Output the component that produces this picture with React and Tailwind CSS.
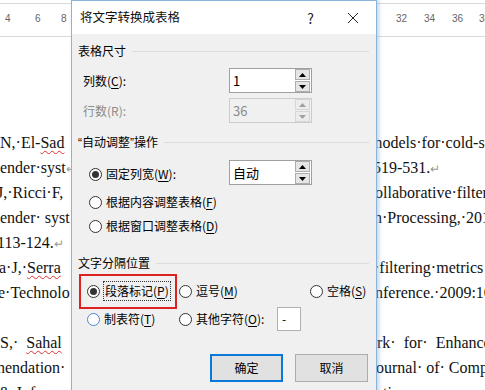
import React from 'react';

const Radio = ({ checked = false, blue = false }) => (
    <span className={`w-[13px] h-[13px] rounded-full border bg-white flex items-center justify-center shrink-0 ${blue ? 'border-[#4d87c4]' : 'border-[#333333]'}`}>
        {checked && <span className="w-[7px] h-[7px] rounded-full bg-[#333333]"></span>}
    </span>
);

const Spin = ({ disabled = false }) => {
    const tri = disabled ? '#a0a0a0' : '#000000';
    const btn = `w-[15px] h-[11px] border flex items-center justify-center ${disabled ? 'border-[#d6d6d6] bg-[#ececec]' : 'border-[#adadad] bg-[#e5e5e5]'}`;
    return (
        <div className="flex flex-col gap-[1px] mr-[1px]">
            <div className={btn}>
                <svg width="7" height="4" viewBox="0 0 7 4"><path d="M0 4 L3.5 0 L7 4 Z" fill={tri} /></svg>
            </div>
            <div className={btn}>
                <svg width="7" height="4" viewBox="0 0 7 4"><path d="M0 0 L3.5 4 L7 0 Z" fill={tri} /></svg>
            </div>
        </div>
    );
};

const SpinBox = ({ value, disabled = false }) => (
    <div className={`w-[83px] h-[25px] border flex items-center justify-between ${disabled ? 'border-[#cccccc] bg-[#f0f0f0] text-[#8a8a8a]' : 'border-[#a0a0a0] bg-white text-black'}`}>
        <span className="pl-[3px] text-[13px]">{value}</span>
        <Spin disabled={disabled} />
    </div>
);

const GroupHead = ({ children }) => (
    <div className="h-[16px] flex items-center gap-[6px] pl-[6px] pr-[7px]">
        <span className="text-[12px] text-black whitespace-nowrap">{children}</span>
        <div className="flex-1 border-t border-[#dcdcdc]"></div>
    </div>
);

const U = ({ children }) => <span className="underline underline-offset-2">{children}</span>;

// latin quote marks, narrow like the original dialog font
const Q = ({ children }) => <span className="font-['Liberation_Sans',sans-serif]">{children}</span>;

const docLines = [
    { l: 'N,·El-', sq: 'Sad', ml: 0, r: 'models·for·cold-start', rml: -6 },
    { l: 'ender·syst', ml: 0, r: '519-531.', ret: true, rml: -3 },
    { l: 'J,·Ricci·F,', ml: -3, r: 'collaborative·filtering', rml: -8 },
    { l: 'ender·\u00a0syst', ml: 0, r: 'n·Processing,·2010', rml: -2 },
    { l: '113-124.', ret: true, ml: -3 },
    { l: 'a·J,·', sq: 'Serra', ml: -1, r: '·filtering·metrics', rml: -2 },
    { l: 'e·Technolo', ml: -2, r: 'nference.·2009:10', rml: -1 },
    { l: '' },
    { l: 'S,·\u00a0\u00a0', sq: 'Sahal', ml: 0, r: 'rk·\u00a0\u00a0for·\u00a0\u00a0Enhance', rml: 1 },
    { l: 'nendation·', ml: -3, r: 'ournal·\u00a0of·\u00a0Computer', rml: 0 },
    { l: '&·Informa', ml: -1, r: 'ation', rml: 0 },
];

const rulerLeft = [['4', 5], ['6', 35], ['8', 61]];
const rulerRight = [['32', 396], ['34', 424], ['36', 452], ['38', 479]];

export default function App() {
    return (
        <div className="relative w-[485px] h-[390px] overflow-hidden bg-white">
            {/* document behind the dialog */}
            <div className="flex flex-col">
                <div className="relative h-[34px] mt-[3px] border-t border-b border-[#d9d9d9] text-[10px] text-[#666666] font-['Liberation_Sans',sans-serif]">
                    {[...rulerLeft, ...rulerRight].map(([n, x]) => (
                        <span key={n} className="absolute top-[7px]" style={{ left: x }}>{n}</span>
                    ))}
                </div>
                <div className="mt-[93px] flex flex-col font-['Liberation_Serif',serif] text-[16px] text-[#111111]">
                    {docLines.map((line, i) => (
                        <div key={i} className="h-[25px] flex items-center whitespace-nowrap">
                            <div className="w-[376px] shrink-0 overflow-hidden">
                                <span style={{ marginLeft: line.ml || 0 }} className="inline-block">
                                    {line.l}
                                    {line.sq && <span className="underline decoration-wavy decoration-[#e03030] decoration-1 underline-offset-2">{line.sq}</span>}
                                    {line.ret && <span className="text-[#9a9a9a] text-[12px]">↵</span>}
                                </span>
                            </div>
                            {line.r && (
                                <span style={{ marginLeft: line.rml || 0 }}>
                                    {line.r}
                                    {line.ret && <span className="text-[#9a9a9a] text-[12px]">↵</span>}
                                </span>
                            )}
                        </div>
                    ))}
                </div>
            </div>

            {/* dialog */}
            <div className="absolute left-[71px] top-0 w-[306px] h-[400px] border border-[#8ab4dc] shadow-[2px_0_4px_rgba(120,160,200,0.45)] bg-[#f0f0f0] flex flex-col font-['Noto_Sans_CJK_SC',sans-serif] text-black leading-none">
                <div className="h-[33px] bg-white flex items-center shrink-0">
                    <span className="ml-[8px] text-[12.5px] text-[#111111]">将文字转换成表格</span>
                    <span className="ml-auto text-[14px] text-[#222222] mr-[33px]">?</span>
                    <svg width="12" height="12" viewBox="0 0 12 12" className="mr-[17px]">
                        <path d="M1 1 L11 11 M11 1 L1 11" stroke="#222222" strokeWidth="1" />
                    </svg>
                </div>

                <div className="pt-[9px] flex flex-col">
                    <GroupHead>表格尺寸</GroupHead>
                    <div className="mt-[9px] h-[25px] flex items-center">
                        <span className="w-[157px] pl-[11px] text-[12px]">列数(<U>C</U>):</span>
                        <SpinBox value="1" />
                    </div>
                    <div className="mt-[5px] h-[25px] flex items-center">
                        <span className="w-[157px] pl-[11px] text-[12px] text-[#8a8a8a]">行数(R):</span>
                        <SpinBox value="36" disabled />
                    </div>

                    <div className="mt-[11px]">
                        <GroupHead><Q>“</Q>自动调整<Q>”</Q>操作</GroupHead>
                    </div>
                    <div className="mt-[10px] h-[25px] flex items-center">
                        <div className="w-[157px] pl-[17px] flex items-center gap-[4px] text-[12px] pt-[3px]">
                            <Radio checked />
                            <span>固定列宽(<U>W</U>):</span>
                        </div>
                        <SpinBox value="自动" />
                    </div>
                    <div className="mt-[5px] h-[24px] pl-[17px] flex items-center gap-[4px] text-[12px]">
                        <Radio />
                        <span>根据内容调整表格(<U>F</U>)</span>
                    </div>
                    <div className="h-[24px] pl-[17px] flex items-center gap-[4px] text-[12px]">
                        <Radio />
                        <span>根据窗口调整表格(<U>D</U>)</span>
                    </div>

                    <div className="mt-[17px]">
                        <GroupHead>文字分隔位置</GroupHead>
                    </div>
                    <div className="relative mt-[8px] h-[24px] pl-[15px] grid grid-cols-[92px_131px_1fr] items-center text-[12px]">
                        <div className="flex items-center gap-[3px]">
                            <Radio checked />
                            <span className="border border-dotted border-[#333333] px-[1px] py-[3px]">段落标记(<U>P</U>)</span>
                        </div>
                        <div className="flex items-center gap-[4px]">
                            <Radio />
                            <span>逗号(<U>M</U>)</span>
                        </div>
                        <div className="flex items-center gap-[4px]">
                            <Radio />
                            <span>空格(<U>S</U>)</span>
                        </div>
                        <div className="absolute left-[7px] top-[-5px] w-[98px] h-[35px] border-2 border-[#dd2222]"></div>
                    </div>
                    <div className="mt-[4px] h-[24px] pl-[15px] grid grid-cols-[92px_1fr] items-center text-[12px]">
                        <div className="flex items-center gap-[4px]">
                            <Radio blue />
                            <span>制表符(<U>T</U>)</span>
                        </div>
                        <div className="flex items-center">
                            <div className="flex items-center gap-[4px] w-[98px]">
                                <Radio />
                                <span>其他字符(<U>O</U>):</span>
                            </div>
                            <div className="w-[24px] h-[24px] bg-white border border-[#b0b0b0] flex items-center pl-[4px] text-[12px]">-</div>
                        </div>
                    </div>

                    <div className="mt-[23px] h-[28px] flex items-center pl-[138px] gap-[12px] text-[12px]">
                        <div className="w-[73px] h-[28px] border-2 border-[#0a78d6] bg-[#e1e1e1] flex items-center justify-center">确定</div>
                        <div className="w-[73px] h-[28px] border border-[#adadad] bg-[#e1e1e1] flex items-center justify-center">取消</div>
                    </div>
                </div>
            </div>
        </div>
    );
}
